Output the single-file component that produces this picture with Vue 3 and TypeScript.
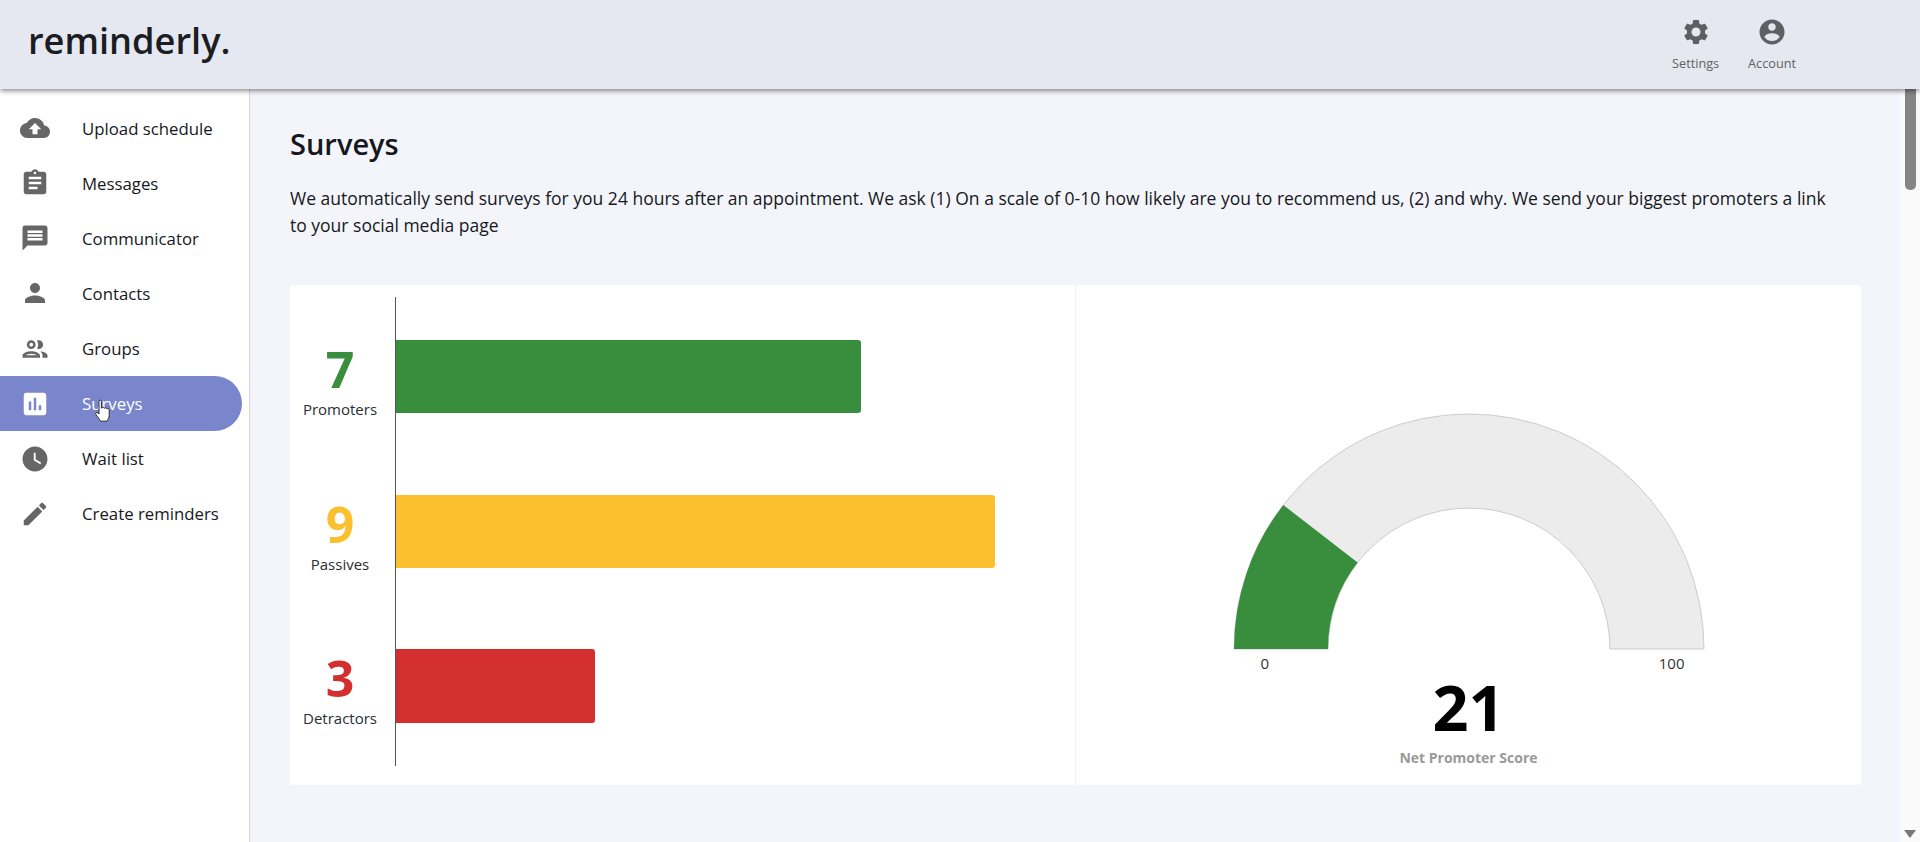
<script setup lang="ts">
interface NavItem {
  label: string
  icon: string
  active?: boolean
}

interface Stat {
  value: number
  label: string
  kind: string
  width: number
}

const navItems: NavItem[] = [
  { label: 'Upload schedule', icon: 'M19.35 10.04C18.67 6.59 15.64 4 12 4 9.11 4 6.6 5.64 5.35 8.04 2.34 8.36 0 10.91 0 14c0 3.31 2.69 6 6 6h13c2.76 0 5-2.24 5-5 0-2.64-2.05-4.78-4.65-4.96zM14 13v4h-4v-4H7l5-5 5 5h-3z' },
  { label: 'Messages', icon: 'M19 3h-4.18C14.4 1.84 13.3 1 12 1c-1.3 0-2.4.84-2.82 2H5c-1.1 0-2 .9-2 2v14c0 1.1.9 2 2 2h14c1.1 0 2-.9 2-2V5c0-1.1-.9-2-2-2zm-7 0c.55 0 1 .45 1 1s-.45 1-1 1-1-.45-1-1 .45-1 1-1zm2 14H7v-2h7v2zm3-4H7v-2h10v2zm0-4H7V7h10v2z' },
  { label: 'Communicator', icon: 'M20 2H4c-1.1 0-1.99.9-1.99 2L2 22l4-4h14c1.1 0 2-.9 2-2V4c0-1.1-.9-2-2-2zM18 14H6v-2h12v2zm0-3H6V9h12v2zm0-3H6V6h12v2z' },
  { label: 'Contacts', icon: 'M12 12c2.21 0 4-1.79 4-4s-1.79-4-4-4-4 1.79-4 4 1.79 4 4 4zm0 2c-2.67 0-8 1.34-8 4v2h16v-2c0-2.66-5.33-4-8-4z' },
  { label: 'Groups', icon: 'M9 13.75c-2.34 0-7 1.17-7 3.5V19h14v-1.75c0-2.33-4.66-3.5-7-3.5zM4.34 17c.84-.58 2.87-1.25 4.66-1.25s3.82.67 4.66 1.25H4.34zM9 12c1.93 0 3.5-1.57 3.5-3.5S10.93 5 9 5 5.5 6.57 5.5 8.5 7.07 12 9 12zm0-5c.83 0 1.5.67 1.5 1.5S9.83 10 9 10s-1.5-.67-1.5-1.5S8.17 7 9 7zm7.04 6.81c1.16.84 1.96 1.96 1.96 3.44V19h4v-1.75c0-2.02-3.5-3.17-5.96-3.44zM15 12c1.93 0 3.5-1.57 3.5-3.5S16.93 5 15 5c-.54 0-1.04.13-1.5.35.63.89 1 1.98 1 3.15s-.37 2.26-1 3.15c.46.22.96.35 1.5.35z' },
  { label: 'Surveys', active: true, icon: 'M19 3H5c-1.1 0-2 .9-2 2v14c0 1.1.9 2 2 2h14c1.1 0 2-.9 2-2V5c0-1.1-.9-2-2-2zM9 17H7v-7h2v7zm4 0h-2V7h2v10zm4 0h-2v-4h2v4z' },
  { label: 'Wait list', icon: 'M12 2C6.5 2 2 6.5 2 12s4.5 10 10 10 10-4.5 10-10S17.5 2 12 2zm4.2 14.2L11 13V7h1.5v5.2l4.5 2.7-.8 1.3z' },
  { label: 'Create reminders', icon: 'M3 17.25V21h3.75L17.81 9.94l-3.75-3.75L3 17.25zM20.71 7.04c.39-.39.39-1.02 0-1.41l-2.34-2.34c-.39-.39-1.02-.39-1.41 0l-1.83 1.83 3.75 3.75 1.83-1.83z' }
]

const stats: Stat[] = [
  { value: 7, label: 'Promoters', kind: 'good', width: 465 },
  { value: 9, label: 'Passives', kind: 'mid', width: 599 },
  { value: 3, label: 'Detractors', kind: 'bad', width: 199 }
]

const settingsIcon = 'M19.14 12.94c.04-.3.06-.61.06-.94 0-.32-.02-.64-.07-.94l2.03-1.58c.18-.14.23-.41.12-.61l-1.92-3.32c-.12-.22-.37-.29-.59-.22l-2.39.96c-.5-.38-1.03-.7-1.62-.94l-.36-2.54c-.04-.24-.24-.41-.48-.41h-3.84c-.24 0-.43.17-.47.41l-.36 2.54c-.59.24-1.13.57-1.62.94l-2.39-.96c-.22-.08-.47 0-.59.22L2.74 8.87c-.12.21-.08.47.12.61l2.03 1.58c-.05.3-.09.63-.09.94s.02.64.07.94l-2.03 1.58c-.18.14-.23.41-.12.61l1.92 3.32c.12.22.37.29.59.22l2.39-.96c.5.38 1.03.7 1.62.94l.36 2.54c.05.24.24.41.48.41h3.84c.24 0 .44-.17.47-.41l.36-2.54c.59-.24 1.13-.56 1.62-.94l2.39.96c.22.08.47 0 .59-.22l1.92-3.32c.12-.22.07-.47-.12-.61l-2.01-1.58zM12 15.6c-1.98 0-3.6-1.62-3.6-3.6s1.62-3.6 3.6-3.6 3.6 1.62 3.6 3.6-1.62 3.6-3.6 3.6z'
const accountIcon = 'M12 2C6.48 2 2 6.48 2 12s4.48 10 10 10 10-4.48 10-10S17.52 2 12 2zm0 3c1.66 0 3 1.34 3 3s-1.34 3-3 3-3-1.34-3-3 1.34-3 3-3zm0 14.2c-2.5 0-4.71-1.28-6-3.22.03-1.99 4-3.08 6-3.08 1.99 0 5.97 1.09 6 3.08-1.29 1.94-3.5 3.22-6 3.22z'
</script>

<template>
  <div class="app">
    <header class="topbar">
      <div class="logo">reminderly.</div>
      <div class="top-actions">
        <div class="top-action">
          <svg class="icon" viewBox="0 0 24 24"><path :d="settingsIcon" /></svg>
          <span>Settings</span>
        </div>
        <div class="top-action">
          <svg class="icon" viewBox="0 0 24 24"><path :d="accountIcon" /></svg>
          <span>Account</span>
        </div>
      </div>
    </header>

    <div class="body">
      <nav class="sidebar">
        <div v-for="item in navItems" :key="item.label" class="nav-item" :class="{ active: item.active }">
          <svg class="icon" viewBox="0 0 24 24"><path :d="item.icon" /></svg>
          <span>{{ item.label }}</span>
        </div>
        <svg class="cursor" viewBox="0 0 18 24">
          <path d="M5 2.2c0-1.4 2.4-1.4 2.4 0v7l.4-.2c.3-1.2 2.2-1.1 2.4.2l.3.2c.4-1 2.1-.9 2.3.3l.3.2c.5-.7 2-.5 2.1.8v5.6c0 2.6-1.4 4.2-2.2 5.9H6.600c-1.100-2-2.600-3.800-4.500-6.500-1.100-1.700.5-3 1.800-1.900l1.100 1.200z" />
        </svg>
      </nav>

      <main class="content">
        <h1>Surveys</h1>
        <p class="intro">We automatically send surveys for you 24 hours after an appointment. We ask (1) On a scale of 0-10 how likely are you to recommend us, (2) and why. We send your biggest promoters a link to your social media page</p>

        <section class="card">
          <div class="bar-chart">
            <div class="stat-labels">
              <div v-for="stat in stats" :key="stat.label" class="stat">
                <div class="stat-value" :class="stat.kind">{{ stat.value }}</div>
                <div class="stat-label">{{ stat.label }}</div>
              </div>
            </div>
            <div class="bars">
              <div
                v-for="stat in stats"
                :key="stat.label"
                class="bar"
                :class="stat.kind"
                :style="{ width: stat.width + 'px' }"
              />
            </div>
          </div>

          <div class="gauge">
            <svg class="gauge-svg" viewBox="0 0 472 238">
              <path class="gauge-track" d="M1 236A235 235 0 0 1 471 236L377 236A141 141 0 0 0 95 236Z" />
              <path class="gauge-fill" d="M1 236A235 235 0 0 1 50.300 92L124.600 149.600A141 141 0 0 0 95 236Z" />
            </svg>
            <div class="gauge-scale">
              <span>0</span>
              <span>100</span>
            </div>
            <div class="gauge-value">21</div>
            <div class="gauge-caption">Net Promoter Score</div>
          </div>
        </section>
      </main>

      <div class="scrollbar">
        <div class="scroll-thumb" />
        <div class="scroll-arrow" />
      </div>
    </div>
  </div>
</template>

<style scoped>
.app {
  display: flex;
  flex-direction: column;
  height: 842px;
  overflow: hidden;
  font-family: "Open Sans", "Noto Sans", sans-serif;
  color: #16181d;
}

.topbar {
  position: relative;
  z-index: 2;
  flex: 0 0 89px;
  display: flex;
  align-items: center;
  justify-content: space-between;
  padding: 0 124px 0 28px;
  box-sizing: border-box;
  background: #e5e8f0;
  box-shadow: 0 2px 5px rgba(0, 0, 0, 0.45);
}

.logo {
  font-size: 36.2px;
  font-weight: 600;
  line-height: 1;
  margin-top: -8px;
  color: #1b1d22;
}

.top-actions {
  display: flex;
  gap: 29px;
}

.top-action {
  display: flex;
  flex-direction: column;
  align-items: center;
  font-size: 12.7px;
  line-height: 18px;
  color: #5f6165;
  margin-top: -1px;
}

.icon {
  width: 30px;
  height: 30px;
  fill: #666;
  flex-shrink: 0;
}

.top-action .icon {
  fill: #5f6063;
  margin-bottom: 7px;
}

.body {
  flex: 1;
  display: flex;
  min-height: 0;
}

.sidebar {
  position: relative;
  flex: 0 0 250px;
  box-sizing: border-box;
  padding-top: 11.5px;
  padding-right: 7px;
  background: #fff;
  border-right: 1px solid #d4d6da;
}

.nav-item {
  display: flex;
  align-items: center;
  gap: 32px;
  height: 55.14px;
  padding-left: 20px;
  font-size: 16.8px;
  color: #16181d;
}

.nav-item.active {
  background: #7986cb;
  color: #fff;
  border-radius: 0 28px 28px 0;
}

.nav-item.active .icon {
  fill: #fff;
}

.cursor {
  position: absolute;
  left: 94px;
  top: 310px;
  width: 18px;
  height: 24px;
  fill: #fff;
  stroke: #2a2a2a;
  stroke-width: 1;
}

.content {
  flex: 1;
  min-width: 0;
  box-sizing: border-box;
  padding: 37px 39px 0 40px;
  background: #f4f5fa;
}

h1 {
  margin: 0;
  font-size: 29px;
  font-weight: 600;
  line-height: 36px;
  color: #16181d;
}

.intro {
  margin: 23px 0 0;
  font-size: 17.5px;
  line-height: 27px;
  max-width: 1550px;
  color: #16181d;
}

.card {
  display: flex;
  height: 500px;
  margin-top: 46px;
  background: #fff;
  border-radius: 3px;
}

.bar-chart {
  flex: 0 0 786px;
  display: flex;
  align-items: flex-start;
  padding-top: 12px;
  box-sizing: border-box;
  border-right: 1px solid #f3f3f5;
}

.stat-labels {
  flex: 0 0 105px;
  box-sizing: border-box;
  display: flex;
  flex-direction: column;
  gap: 81.3px;
  padding: 43px 5px 0 0;
}

.stat {
  height: 73.4px;
  text-align: center;
}

.stat-value {
  font-size: 50px;
  font-weight: 700;
  line-height: 60px;
  margin-top: -1px;
}

.stat-label {
  font-size: 15px;
  line-height: 20px;
  color: #2b2d33;
}

.bars {
  flex: 1;
  box-sizing: border-box;
  display: flex;
  flex-direction: column;
  gap: 81.3px;
  height: 469px;
  padding-top: 43px;
  border-left: 1px solid #555;
}

.bar {
  height: 73.4px;
  border-radius: 0 3px 3px 0;
}

.good { color: #388e3c; }
.mid { color: #fbc02d; }
.bad { color: #d32f2f; }

.bar.good { background: #388e3c; }
.bar.mid { background: #fcbf2d; }
.bar.bad { background: #d32f2f; }

.gauge {
  flex: 1;
  display: flex;
  flex-direction: column;
  align-items: center;
  padding-top: 128px;
}

.gauge-svg {
  width: 472px;
  height: 238px;
  flex-shrink: 0;
}

.gauge-track {
  fill: #ececec;
  stroke: #ccc;
  stroke-width: 1;
}

.gauge-fill {
  fill: #388e3c;
}

.gauge-scale {
  display: flex;
  justify-content: space-between;
  box-sizing: border-box;
  width: 472px;
  padding: 0 20px 0 28px;
  font-size: 15px;
  line-height: 20px;
  color: #333;
  margin-top: 2px;
}

.gauge-value {
  font-size: 63px;
  font-weight: 700;
  line-height: 70px;
  color: #000;
  margin-top: -1px;
}

.gauge-caption {
  font-size: 14px;
  font-weight: 700;
  line-height: 20px;
  color: #999;
  margin-top: 6px;
}

.scrollbar {
  flex: 0 0 20px;
  display: flex;
  flex-direction: column;
  align-items: center;
  background: #fafafa;
}

.scroll-thumb {
  width: 11px;
  height: 101px;
  background: #858585;
  border-radius: 0 0 5px 5px;
}

.scroll-arrow {
  margin-top: auto;
  margin-bottom: 4px;
  width: 0;
  height: 0;
  border-left: 6px solid transparent;
  border-right: 6px solid transparent;
  border-top: 8px solid #777;
}
</style>
